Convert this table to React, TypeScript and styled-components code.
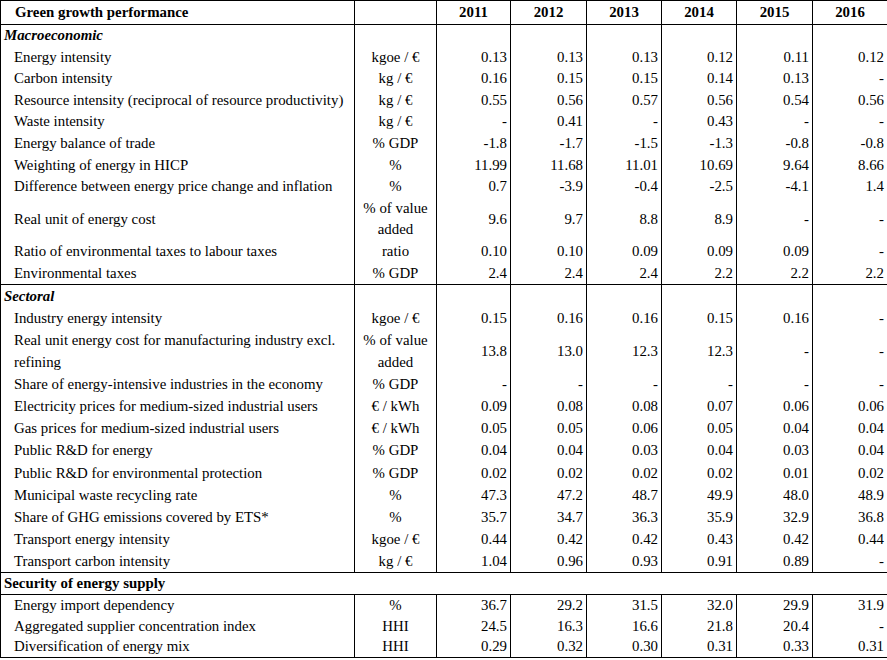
import React from 'react';
import styled, { createGlobalStyle } from 'styled-components';

const GlobalStyle = createGlobalStyle`
  html, body {
    margin: 0;
    padding: 0;
    background: #fff;
  }
  body {
    font-family: "Liberation Serif", "Times New Roman", serif;
    color: #000;
  }
`;

const Table = styled.table`
  border-collapse: collapse;
  table-layout: fixed;
  width: 887px;
  font-size: 14.85px;
  line-height: 21.6px;
  border: 1px solid #000;
`;

const HeadRow = styled.tr`
  height: 24px;
  border-bottom: 1px solid #000;
`;

const HeadCell = styled.th<{ $align?: 'left' | 'center' }>`
  font-weight: bold;
  text-align: ${(p) => p.$align ?? 'center'};
  padding: 0 0 0 ${(p) => (p.$align === 'left' ? '14px' : '0')};
  border-left: 1px solid #000;
  border-right: 1px solid #000;
  vertical-align: middle;
`;

const Section = styled.tbody<{ $line?: number }>`
  border-top: 1px solid #000;
  line-height: ${(p) => p.$line ?? 21.6}px;
`;

const Cell = styled.td`
  padding: 0;
  border-left: 1px solid #000;
  border-right: 1px solid #000;
  vertical-align: middle;
  white-space: nowrap;
`;

const SectionTitle = styled(Cell)<{ $italic?: boolean }>`
  font-weight: bold;
  font-style: ${(p) => (p.$italic ? 'italic' : 'normal')};
  padding-left: 3px;
`;

const WideTitle = styled(SectionTitle)`
  border-bottom: 1px solid #000;
`;

const LabelCell = styled(Cell)`
  padding-left: 13px;
`;

const UnitCell = styled(Cell)`
  text-align: center;
`;

const ValueCell = styled(Cell)`
  text-align: right;
  padding-right: 3px;
`;

type Row = {
  label: React.ReactNode;
  unit: React.ReactNode;
  values: string[];
};

const years = ['2011', '2012', '2013', '2014', '2015', '2016'];

const macro: Row[] = [
  { label: 'Energy intensity', unit: 'kgoe / €', values: ['0.13', '0.13', '0.13', '0.12', '0.11', '0.12'] },
  { label: 'Carbon intensity', unit: 'kg / €', values: ['0.16', '0.15', '0.15', '0.14', '0.13', '-'] },
  { label: 'Resource intensity (reciprocal of resource productivity)', unit: 'kg / €', values: ['0.55', '0.56', '0.57', '0.56', '0.54', '0.56'] },
  { label: 'Waste intensity', unit: 'kg / €', values: ['-', '0.41', '-', '0.43', '-', '-'] },
  { label: 'Energy balance of trade', unit: '% GDP', values: ['-1.8', '-1.7', '-1.5', '-1.3', '-0.8', '-0.8'] },
  { label: 'Weighting of energy in HICP', unit: '%', values: ['11.99', '11.68', '11.01', '10.69', '9.64', '8.66'] },
  { label: 'Difference between energy price change and inflation', unit: '%', values: ['0.7', '-3.9', '-0.4', '-2.5', '-4.1', '1.4'] },
  { label: 'Real unit of energy cost', unit: <>% of value<br />added</>, values: ['9.6', '9.7', '8.8', '8.9', '-', '-'] },
  { label: 'Ratio of environmental taxes to labour taxes', unit: 'ratio', values: ['0.10', '0.10', '0.09', '0.09', '0.09', '-'] },
  { label: 'Environmental taxes', unit: '% GDP', values: ['2.4', '2.4', '2.4', '2.2', '2.2', '2.2'] },
];

const sectoral: Row[] = [
  { label: 'Industry energy intensity', unit: 'kgoe / €', values: ['0.15', '0.16', '0.16', '0.15', '0.16', '-'] },
  { label: <>Real unit energy cost for manufacturing industry excl.<br />refining</>, unit: <>% of value<br />added</>, values: ['13.8', '13.0', '12.3', '12.3', '-', '-'] },
  { label: 'Share of energy-intensive industries in the economy', unit: '% GDP', values: ['-', '-', '-', '-', '-', '-'] },
  { label: 'Electricity prices for medium-sized industrial users', unit: '€ / kWh', values: ['0.09', '0.08', '0.08', '0.07', '0.06', '0.06'] },
  { label: 'Gas prices for medium-sized industrial users', unit: '€ / kWh', values: ['0.05', '0.05', '0.06', '0.05', '0.04', '0.04'] },
  { label: 'Public R&D for energy', unit: '% GDP', values: ['0.04', '0.04', '0.03', '0.04', '0.03', '0.04'] },
  { label: 'Public R&D for environmental protection', unit: '% GDP', values: ['0.02', '0.02', '0.02', '0.02', '0.01', '0.02'] },
  { label: 'Municipal waste recycling rate', unit: '%', values: ['47.3', '47.2', '48.7', '49.9', '48.0', '48.9'] },
  { label: 'Share of GHG emissions covered by ETS*', unit: '%', values: ['35.7', '34.7', '36.3', '35.9', '32.9', '36.8'] },
  { label: 'Transport energy intensity', unit: 'kgoe / €', values: ['0.44', '0.42', '0.42', '0.43', '0.42', '0.44'] },
  { label: 'Transport carbon intensity', unit: 'kg / €', values: ['1.04', '0.96', '0.93', '0.91', '0.89', '-'] },
];

const security: Row[] = [
  { label: 'Energy import dependency', unit: '%', values: ['36.7', '29.2', '31.5', '32.0', '29.9', '31.9'] },
  { label: 'Aggregated supplier concentration index', unit: 'HHI', values: ['24.5', '16.3', '16.6', '21.8', '20.4', '-'] },
  { label: 'Diversification of energy mix', unit: 'HHI', values: ['0.29', '0.32', '0.30', '0.31', '0.33', '0.31'] },
];

const colWidths = [354, 82, 74, 76, 75, 75, 76, 75];

function DataRows({ rows }: { rows: Row[] }) {
  return (
    <>
      {rows.map((r, i) => (
        <tr key={i}>
          <LabelCell>{r.label}</LabelCell>
          <UnitCell>{r.unit}</UnitCell>
          {r.values.map((v, j) => (
            <ValueCell key={j}>{v}</ValueCell>
          ))}
        </tr>
      ))}
    </>
  );
}

function EmptyCells() {
  return (
    <>
      {colWidths.slice(1).map((_, i) => (
        <Cell key={i} />
      ))}
    </>
  );
}

export default function App() {
  return (
    <>
      <GlobalStyle />
      <Table>
        <colgroup>
          {colWidths.map((w, i) => (
            <col key={i} style={{ width: w }} />
          ))}
        </colgroup>
        <thead>
          <HeadRow>
            <HeadCell $align="left">Green growth performance</HeadCell>
            <HeadCell />
            {years.map((y) => (
              <HeadCell key={y}>{y}</HeadCell>
            ))}
          </HeadRow>
        </thead>
        <Section>
          <tr>
            <SectionTitle $italic>Macroeconomic</SectionTitle>
            <EmptyCells />
          </tr>
          <DataRows rows={macro} />
        </Section>
        <Section $line={22.05}>
          <tr>
            <SectionTitle $italic>Sectoral</SectionTitle>
            <EmptyCells />
          </tr>
          <DataRows rows={sectoral} />
        </Section>
        <Section $line={20.9}>
          <tr>
            <WideTitle colSpan={8}>Security of energy supply</WideTitle>
          </tr>
          <DataRows rows={security} />
        </Section>
      </Table>
    </>
  );
}
